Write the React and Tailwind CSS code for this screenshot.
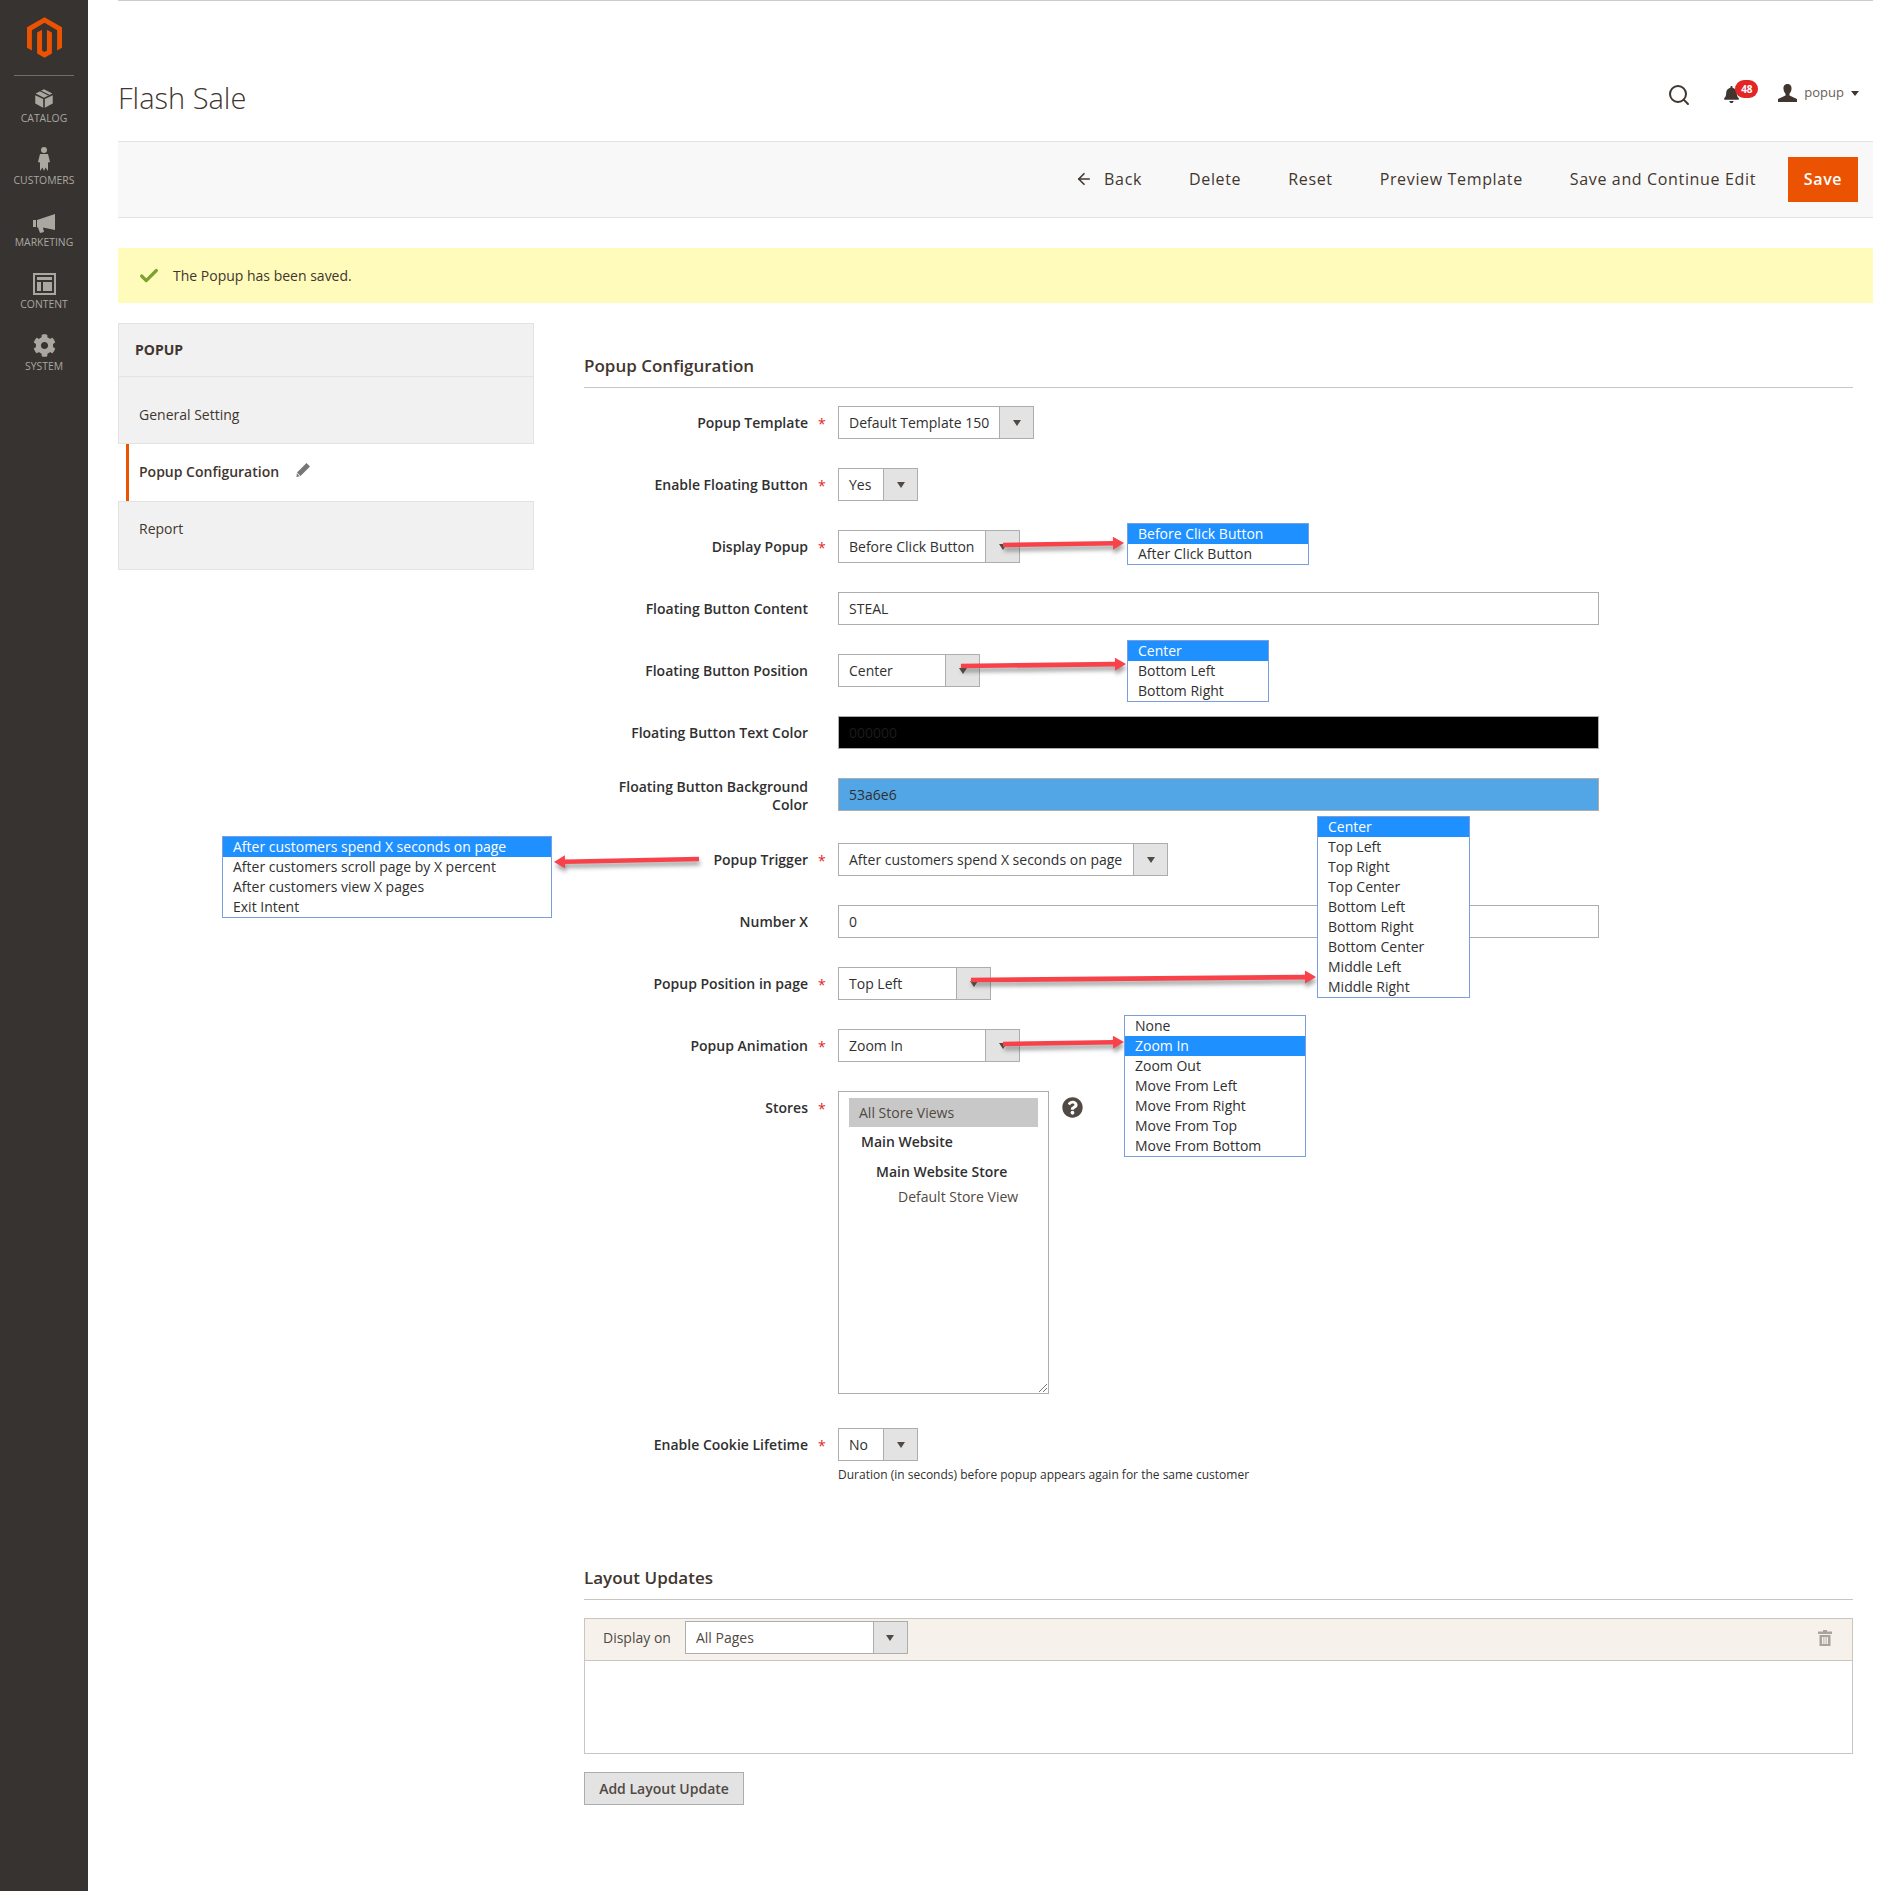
import { ArrowLeft, Check, Search } from 'lucide-react'
import { FaBell, FaCog, FaQuestionCircle } from 'react-icons/fa'

const navIcons = {
  catalog: (
    <svg viewBox="0 0 24 24" className="w-[20px] h-[21px]" fill="#aaa6a0">
      <path d="M12 1l10 5-10 5L2 6z" />
      <path d="M7 3.4l10 5 1.6-.8-10-5z" fill="#373330" />
      <path d="M1.5 8L11 12.7V23l-9.5-5z" />
      <path d="M22.5 8L13 12.7V23l9.5-5z" />
    </svg>
  ),
  customers: (
    <svg viewBox="0 0 12 24" className="w-[12px] h-[24px]" fill="#aaa6a0">
      <circle cx="6" cy="3" r="3" />
      <path d="M2 7h8l2 8-2 .5V24l-2.5-3.5L6 24l-1.5-3.5L2 24v-8.5L0 15z" />
    </svg>
  ),
  marketing: (
    <svg viewBox="0 0 22 19" className="w-[22px] h-[19px]" fill="#aaa6a0">
      <path d="M0 6h3v7H0z" />
      <path d="M4 6l18-6v16L10 13.500l1 4.500-4 1-2-5.500H4z" />
    </svg>
  ),
  content: (
    <svg viewBox="0 0 23 22" className="w-[23px] h-[22px]" fill="#aaa6a0">
      <path fillRule="evenodd" d="M0 0h23v22H0zM2 2v18h19V2z" />
      <path d="M4 4h15v3H4zM4 9h4v9H4zM10 9h9v9h-9z" />
    </svg>
  ),
}

const menu = [
  { key: 'catalog', label: 'Catalog' },
  { key: 'customers', label: 'Customers' },
  { key: 'marketing', label: 'Marketing' },
  { key: 'content', label: 'Content' },
  { key: 'system', label: 'System' },
]

function Select({ value, className }) {
  return (
    <div className={`flex h-[33px] border border-[#adadad] bg-white ${className}`}>
      <span className="flex-1 pl-[10px] leading-[31px] whitespace-nowrap overflow-hidden">{value}</span>
      <span className="w-[34px] shrink-0 flex items-center justify-center bg-[#e3e3e3] border-l border-[#adadad]">
        <span className="w-0 h-0 border-x-[4px] border-t-[6px] border-x-transparent border-t-[#514943]" />
      </span>
    </div>
  )
}

function Row({ label, required, children, className = 'mb-[29px]' }) {
  return (
    <div className={`flex items-start ${className}`}>
      <label className="w-[224px] shrink-0 text-right font-semibold text-[#303030] leading-[33px]">{label}</label>
      <span className="w-[30px] h-[33px] shrink-0 pl-[10px] text-[#e22626] leading-[35px]">{required ? '*' : ''}</span>
      {children}
    </div>
  )
}

function OptionList({ options, selected, className }) {
  return (
    <ul className={`absolute bg-white border border-[#7a9fdc] text-[#303030] ${className}`}>
      {options.map((o) => (
        <li
          key={o}
          className={`h-[20px] leading-[20px] px-[10px] whitespace-nowrap ${o === selected ? 'bg-[#1e90ff] text-white' : ''}`}
        >
          {o}
        </li>
      ))}
    </ul>
  )
}

const arrows = [
  [1003, 545, 1124, 543],
  [961, 666, 1126, 664],
  [699, 859, 554, 862],
  [971, 980, 1316, 977],
  [1003, 1044, 1124, 1042],
]

function arrowPoints([x1, y1, x2, y2]) {
  const len = Math.hypot(x2 - x1, y2 - y1)
  const ux = (x2 - x1) / len
  const uy = (y2 - y1) / len
  const px = -uy
  const py = ux
  const bx = x2 - ux * 11
  const by = y2 - uy * 11
  const pts = [
    [x1 + px * 2.3, y1 + py * 2.3],
    [bx + px * 2.3, by + py * 2.3],
    [bx + px * 6.5, by + py * 6.5],
    [x2, y2],
    [bx - px * 6.5, by - py * 6.5],
    [bx - px * 2.3, by - py * 2.3],
    [x1 - px * 2.3, y1 - py * 2.3],
  ]
  return pts.map((p) => p.join(',')).join(' ')
}

export default function App() {
  return (
    <div className="relative flex min-h-[1891px] bg-white text-[14px] text-[#303030] font-['Open_Sans',sans-serif]">
      {/* Sidebar */}
      <aside className="w-[88px] shrink-0 bg-[#373330] flex flex-col items-center">
        <svg viewBox="0 0 43 50" className="w-[35px] h-[41px] mt-[17px]" fill="#eb5202">
          <path d="M21.500 0L43 12.500v25L37 41V16L21.500 7 6 16v25L0 37.500v-25z" />
          <path d="M21.500 50l-9.100-5.300V19l6.100-3.500V41l3 1.800 3-1.800V15.500l6.100 3.500v25.700z" />
        </svg>
        <div className="w-[60px] h-px bg-[#736e69] mt-[17px]" />
        <nav className="flex flex-col w-full">
          {menu.map(({ key, label }) => (
            <a key={key} className="h-[62px] pt-[8px] flex flex-col items-center text-[#aaa6a0]">
              <span className="h-[27px] pb-[2px] flex items-end justify-center">
                {key === 'system' ? <FaCog className="w-[23px] h-[23px]" /> : navIcons[key]}
              </span>
              <span className="text-[10.4px] leading-[14px] uppercase whitespace-nowrap">{label}</span>
            </a>
          ))}
        </nav>
      </aside>

      {/* Main Content */}
      <main className="flex-1 min-w-0 pl-[30px] pr-[30px]">
        <header className="h-[141px] border-t border-[#cccccc] flex justify-between">
          <h1 className="pt-[79px] text-[29px] leading-[36px] font-light text-[#41362f]">Flash Sale</h1>
          <div className="pt-[82px] pr-[14px] flex items-start text-[#41362f]">
            <Search className="w-[24px] h-[24px] mr-[32px]" strokeWidth={2} />
            <div className="relative w-[33px] mr-[22px] pt-[3px]">
              <FaBell className="w-[17px] h-[17px]" />
              <span className="absolute left-[12px] top-[-3px] w-[23px] h-[18px] rounded-full bg-[#e22626] text-white text-[10px] font-bold leading-[18px] text-center">
                48
              </span>
            </div>
            <svg viewBox="0 0 19 18" className="w-[19px] h-[18px] mt-[1px] mr-[7px]" fill="#41362f">
              <path d="M9.500 0c3 0 4.300 2.300 4 5-.2 2-1 3.600-2 4.700v1.800L19 15v3H0v-3l7.500-3.500V9.700c-1-1.100-1.800-2.700-2-4.700-.3-2.700 1-5 4-5z" />
            </svg>
            <span className="text-[13px] leading-[18px] text-[#676056]">popup</span>
            <span className="ml-[7px] mt-[8px] w-0 h-0 border-x-[4px] border-t-[5px] border-x-transparent border-t-[#41362f]" />
          </div>
        </header>

        {/* Page actions */}
        <div className="h-[77px] bg-[#f8f8f8] border-y border-[#e3e3e3] flex items-center justify-end pr-[15px] text-[16px] font-medium tracking-[0.65px] text-[#41362f]">
          <div className="flex items-center gap-[47px] mr-[32px] pb-[2px]">
            <button className="flex items-center gap-[11px]">
              <ArrowLeft className="w-[18px] h-[18px]" strokeWidth={2.2} />
              Back
            </button>
            <button>Delete</button>
            <button>Reset</button>
            <button>Preview Template</button>
            <button>Save and Continue Edit</button>
          </div>
          <button className="w-[70px] h-[45px] pb-[1px] bg-[#eb5202] text-white font-semibold">Save</button>
        </div>

        <div className="mt-[30px] h-[55px] bg-[#fffbbb] flex items-center pl-[20px] gap-[13px] text-[#41362f]">
          <Check className="w-[22px] h-[22px] text-[#79a22e]" strokeWidth={3.5} />
          The Popup has been saved.
        </div>

        <div className="flex mt-[20px] items-start">
          {/* Tabs */}
          <div className="w-[416px] shrink-0">
            <div className="h-[54px] bg-[#f1f1f1] border border-[#e3e3e3] pl-[16px] leading-[52px] font-bold text-[#41362f]">
              POPUP
            </div>
            <a className="block h-[67px] bg-[#f1f1f1] border-x border-b border-[#e3e3e3] pl-[20px] pt-[27px] leading-[22px] text-[#41362f]">
              General Setting
            </a>
            <a className="ml-[8px] flex items-center h-[57px] border-l-[3px] border-l-[#eb5202] pl-[10px] pb-[3px] font-semibold text-[#41362f]">
              Popup Configuration
              <svg viewBox="0 0 14 14" className="w-[14px] h-[14px] ml-[17px] mb-[2px]" fill="#767676">
                <path d="M10.500 0L14 3.500 4.500 13 1 9.500zM.7 10.300l3 3-3 .7zM0 14l1-1 .5.5z" />
              </svg>
            </a>
            <a className="block h-[69px] bg-[#f1f1f1] border border-[#e3e3e3] pl-[20px] pt-[16px] leading-[22px] text-[#41362f]">
              Report
            </a>
          </div>

          {/* Form */}
          <div className="ml-[50px] mr-[20px] flex-1 min-w-0">
            <h2 className="pt-[31px] pb-[9px] leading-[24px] text-[17px] font-semibold text-[#41362f] border-b border-[#cac5be]">
              Popup Configuration
            </h2>
            <div className="mt-[18px]">
              <Row label="Popup Template" required>
                <Select value="Default Template 150" className="w-[196px]" />
              </Row>
              <Row label="Enable Floating Button" required>
                <Select value="Yes" className="w-[80px]" />
              </Row>
              <Row label="Display Popup" required>
                <Select value="Before Click Button" className="w-[182px]" />
              </Row>
              <Row label="Floating Button Content">
                <input
                  readOnly
                  value="STEAL"
                  className="w-[761px] h-[33px] border border-[#adadad] pl-[10px] outline-none"
                />
              </Row>
              <Row label="Floating Button Position">
                <Select value="Center" className="w-[142px]" />
              </Row>
              <Row label="Floating Button Text Color">
                <input
                  readOnly
                  value="000000"
                  className="w-[761px] h-[33px] border border-[#adadad] pl-[10px] bg-black text-[#1c1c1c] outline-none"
                />
              </Row>
              <Row label={<span className="block leading-[18px]">Floating Button Background<br />Color</span>}>
                <input
                  readOnly
                  value="53a6e6"
                  className="w-[761px] h-[33px] border border-[#adadad] pl-[10px] bg-[#53a6e6] text-[#303030] outline-none"
                />
              </Row>
              <Row label="Popup Trigger" required className="mt-[3px] mb-[29px]">
                <Select value="After customers spend X seconds on page" className="w-[330px]" />
              </Row>
              <Row label="Number X">
                <input readOnly value="0" className="w-[761px] h-[33px] border border-[#adadad] pl-[10px] outline-none" />
              </Row>
              <Row label="Popup Position in page" required>
                <Select value="Top Left" className="w-[153px]" />
              </Row>
              <Row label="Popup Animation" required>
                <Select value="Zoom In" className="w-[182px]" />
              </Row>
              <Row label="Stores" required className="mb-[34px]">
                <div className="relative w-[211px] h-[303px] border border-[#adadad] pt-[6px]">
                  <div className="mx-[10px] h-[29px] bg-[#c8c8c8] pl-[10px] leading-[29px] text-[#514943]">All Store Views</div>
                  <div className="pl-[22px] h-[30px] leading-[30px] font-semibold">Main Website</div>
                  <div className="pl-[37px] h-[30px] leading-[30px] font-semibold">Main Website Store</div>
                  <div className="pl-[59px] h-[20px] leading-[20px] text-[#514943]">Default Store View</div>
                  <svg viewBox="0 0 10 10" className="absolute right-0 bottom-0 w-[10px] h-[10px]" stroke="#777777">
                    <path d="M1 9l8-8M5 9l4-4" />
                  </svg>
                </div>
                <FaQuestionCircle className="w-[21px] h-[21px] ml-[13px] mt-[6px] text-[#514943]" />
              </Row>
              <Row label="Enable Cookie Lifetime" required className="mb-0">
                <Select value="No" className="w-[80px]" />
              </Row>
              <p className="ml-[254px] mt-[6px] text-[12px] leading-[16px]">
                Duration (in seconds) before popup appears again for the same customer
              </p>
            </div>

            <h2 className="mt-[83px] pb-[9px] leading-[24px] text-[17px] font-semibold text-[#41362f] border-b border-[#cac5be]">
              Layout Updates
            </h2>
            <div className="mt-[18px] border border-[#cac5be] h-[136px]">
              <div className="h-[42px] pb-[4px] bg-[#f6f2eb] border-b border-[#cac5be] flex items-center pl-[18px] pr-[20px] text-[#514943]">
                <span>Display on</span>
                <Select value="All Pages" className="w-[223px] ml-[14px]" />
                <svg viewBox="0 0 14 16" className="w-[14px] h-[16px] ml-auto" fill="#a9a39b">
                  <path d="M5 0h4v1.500h5v2.500H0V1.500h5z" />
                  <path fillRule="evenodd" d="M1.500 5h11v11h-11zM4 7v7h1.500V7zm2.300 0v7h1.400V7zm2.200 0v7H10V7z" />
                </svg>
              </div>
            </div>
            <button className="mt-[18px] w-[160px] h-[33px] bg-[#e3e3e3] border border-[#adadad] font-semibold text-[#514943]">
              Add Layout Update
            </button>
          </div>
        </div>
      </main>

      {/* Annotations drawn over the form */}
      <svg className="absolute inset-0 w-full h-full pointer-events-none">
        <defs>
          <filter id="arrow-blur" x="-20%" y="-200%" width="140%" height="500%">
            <feGaussianBlur stdDeviation="2" />
          </filter>
        </defs>
        {arrows.map((a) => (
          <g key={a.join()}>
            <polygon points={arrowPoints(a)} fill="#444444" opacity="0.5" filter="url(#arrow-blur)" transform="translate(1 4)" />
            <polygon points={arrowPoints(a)} fill="#f9414a" />
          </g>
        ))}
      </svg>
      <OptionList
        className="left-[1127px] top-[523px] w-[182px]"
        options={['Before Click Button', 'After Click Button']}
        selected="Before Click Button"
      />
      <OptionList
        className="left-[1127px] top-[640px] w-[142px]"
        options={['Center', 'Bottom Left', 'Bottom Right']}
        selected="Center"
      />
      <OptionList
        className="left-[222px] top-[836px] w-[330px]"
        options={['After customers spend X seconds on page', 'After customers scroll page by X percent', 'After customers view X pages', 'Exit Intent']}
        selected="After customers spend X seconds on page"
      />
      <OptionList
        className="left-[1317px] top-[816px] w-[153px]"
        options={['Center', 'Top Left', 'Top Right', 'Top Center', 'Bottom Left', 'Bottom Right', 'Bottom Center', 'Middle Left', 'Middle Right']}
        selected="Center"
      />
      <OptionList
        className="left-[1124px] top-[1015px] w-[182px]"
        options={['None', 'Zoom In', 'Zoom Out', 'Move From Left', 'Move From Right', 'Move From Top', 'Move From Bottom']}
        selected="Zoom In"
      />
    </div>
  )
}
